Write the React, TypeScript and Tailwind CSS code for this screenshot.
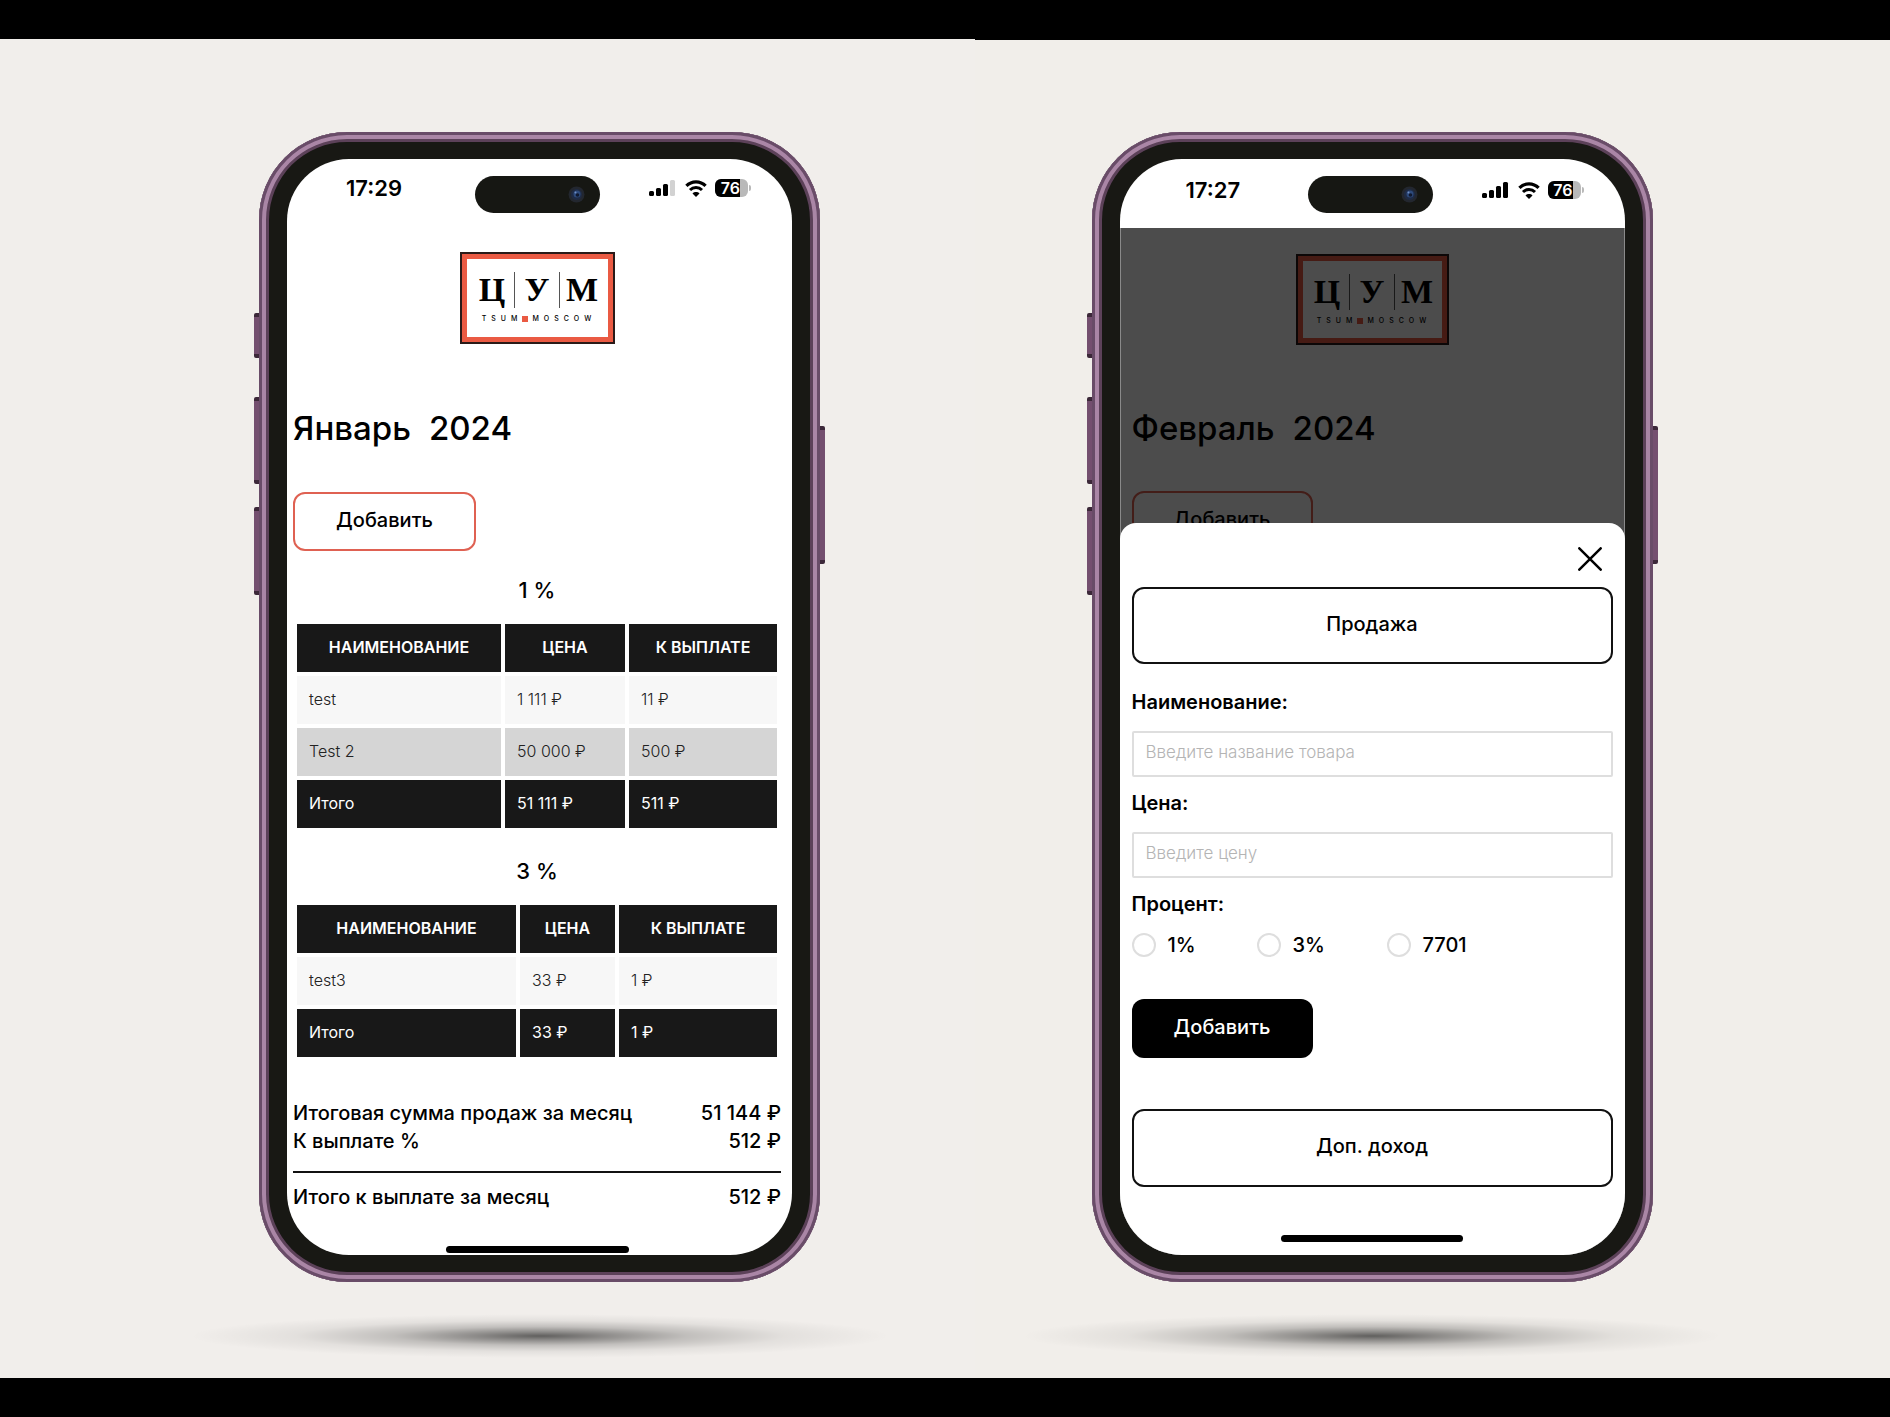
import type { ReactNode } from "react";

type Row = [string, string, string];

function StatusBar({ time, bars, className }: { time: string; bars: number; className: string }) {
  return (
    <div className={`flex h-[69px] shrink-0 items-start justify-between pr-[41px] ${className}`}>
      <span className="text-[22px] font-semibold leading-6">{time}</span>
      <div className="flex h-6 items-center gap-2">
        <svg width="28" height="18" viewBox="0 0 28 18" aria-hidden="true">
          <rect x="0" y="12" width="5" height="5" rx="1.5" fill="#000" />
          <rect x="7" y="9" width="5" height="8" rx="1.5" fill="#000" />
          <rect x="14" y="5" width="5" height="12" rx="1.5" fill="#000" />
          <rect x="21" y="1" width="5" height="16" rx="1.5" fill={bars > 3 ? "#000" : "#d2d2d2"} />
        </svg>
        <svg width="22" height="17" viewBox="0 0 22 17" fill="none" stroke="#000" aria-hidden="true">
          <path d="M1.4 5.9C6.7 0.4 15.3 0.4 20.6 5.9" strokeWidth="3.2" />
          <path d="M5 10C8.3 6.7 13.7 6.7 17 10" strokeWidth="3" />
          <path d="M11 17L7.5 13.4C9.4 11.5 12.6 11.5 14.5 13.4Z" fill="#000" stroke="none" />
        </svg>
        <div className="flex items-center gap-px">
          <div className="flex h-[18px] w-[33px] overflow-hidden rounded-[6px] bg-[#b9b9b9]">
            <span className="w-[25px] bg-black text-right text-base font-semibold leading-[18px] text-white">76</span>
          </div>
          <span className="h-[6px] w-[2px] rounded-r-full bg-[#b9b9b9]" />
        </div>
      </div>
    </div>
  );
}

function Logo({ className }: { className: string }) {
  return (
    <div className={`mx-auto border-2 border-[#2a1a18] bg-[#ea5a43] p-[5px] ${className}`}>
      <div className="flex h-full flex-col items-center bg-white pt-[13px]">
        <div className="flex items-center font-['Liberation_Serif',serif] text-[34px] font-bold leading-9">
          <span className="w-9 text-center">Ц</span>
          <span className="mx-1 h-9 w-px bg-[#555]" />
          <span className="w-9 text-center">У</span>
          <span className="mx-1 h-9 w-px bg-[#555]" />
          <span className="w-9 text-center">М</span>
        </div>
        <div className="mt-1.5 flex items-center text-[7px] font-medium leading-[10px]">
          <span className="tracking-[5px]">TSUM</span>
          <span className="mr-1 size-1.5 bg-[#ea5a43]" />
          <span className="-mr-1 tracking-[5px]">MOSCOW</span>
        </div>
      </div>
    </div>
  );
}

function Phone({ children }: { children: ReactNode }) {
  return (
    <div className="flex w-full flex-col items-center">
      <div className="relative flex min-h-[1150px] w-full max-w-[561px] flex-col rounded-[88px] bg-[#181814] px-7 py-[27px] shadow-[inset_0_0_0_3px_#694c68,inset_0_0_0_7px_#aa86a6,inset_0_0_0_10px_#5c4159]">
        <i className="absolute -left-[5px] top-[181px] h-[45px] w-[5px] rounded-l-xs border-y-4 border-[#3c2839] bg-[#744f6f]" />
        <i className="absolute -left-[5px] top-[265px] h-[87px] w-[5px] rounded-l-xs border-y-4 border-[#3c2839] bg-[#744f6f]" />
        <i className="absolute -left-[5px] top-[375px] h-[88px] w-[5px] rounded-l-xs border-y-4 border-[#3c2839] bg-[#744f6f]" />
        <i className="absolute -right-[5px] top-[294px] h-[138px] w-[5px] rounded-r-xs border-y-4 border-[#3c2839] bg-[#744f6f]" />
        <div className="relative flex flex-1 flex-col overflow-hidden rounded-[62px] bg-white">
          {children}
          <div className="absolute left-[188px] top-[17px] flex h-[37px] w-[125px] items-center justify-end rounded-full bg-[#161713] pr-[15px]">
            <svg width="17" height="17" viewBox="0 0 17 17" aria-hidden="true">
              <circle cx="8.5" cy="8.5" r="8" fill="#23272f" />
              <circle cx="8.5" cy="8.5" r="5.5" fill="#1f2b45" />
              <circle cx="9" cy="8" r="3.5" fill="#2d4a7c" />
              <circle cx="9.5" cy="9" r="1.8" fill="#111a30" />
              <circle cx="7.5" cy="6.5" r="1" fill="#6f8fc4" />
            </svg>
          </div>
        </div>
      </div>
      <div className="mt-8 h-11 w-full max-w-[700px] bg-[radial-gradient(closest-side,rgba(0,0,0,0.6)_0%,rgba(0,0,0,0.42)_18%,rgba(0,0,0,0.2)_42%,rgba(0,0,0,0.06)_70%,transparent_100%)]" />
    </div>
  );
}

function SalesTable({ title, rows, total, cols }: { title: string; rows: Row[]; total: Row; cols: [string, string] }) {
  return (
    <section className="mt-[25px]">
      <h2 className="text-center text-[22px] font-medium leading-7">{title}</h2>
      <table className="mt-4 w-full table-fixed border-separate border-spacing-1 text-base">
        <colgroup>
          <col className={cols[0]} />
          <col className={cols[1]} />
          <col />
        </colgroup>
        <thead>
          <tr className="h-12 text-white">
            <th className="bg-[#181818] pb-0.5 font-semibold">НАИМЕНОВАНИЕ</th>
            <th className="bg-[#181818] pb-0.5 font-semibold">ЦЕНА</th>
            <th className="bg-[#181818] pb-0.5 font-semibold">К ВЫПЛАТЕ</th>
          </tr>
        </thead>
        <tbody>
          {rows.map((row, i) => (
            <tr key={row[0]} className={`h-12 font-light text-[#222] ${i % 2 ? "bg-[#d5d5d5]" : "bg-[#f7f7f7]"}`}>
              {row.map((cell, j) => (
                <td key={j} className="px-3 pb-0.5">{cell}</td>
              ))}
            </tr>
          ))}
        </tbody>
        <tfoot>
          <tr className="h-12 bg-[#181818] text-white">
            {total.map((cell, j) => (
              <td key={j} className="px-3 pb-0.5">{cell}</td>
            ))}
          </tr>
        </tfoot>
      </table>
    </section>
  );
}

function MonthTitle({ month, className }: { month: string; className: string }) {
  return (
    <h1 className={`flex gap-[18px] text-[33px] font-medium leading-10 ${className}`}>
      <span>{month}</span>
      <span>2024</span>
    </h1>
  );
}

function SummaryLine({ label, value }: { label: string; value: string }) {
  return (
    <div className="flex justify-between">
      <dt>{label}</dt>
      <dd>{value}</dd>
    </div>
  );
}

function ReportScreen() {
  return (
    <>
      <StatusBar time="17:29" bars={3} className="pl-[59px] pt-[17px]" />
      <main className="flex flex-1 flex-col pb-0.5 pl-[6px] pr-[11px] pt-6">
        <Logo className="h-[92px] w-[155px]" />
        <MonthTitle month="Январь" className="mt-16" />
        <button type="button" className="mt-11 h-[59px] w-[183px] rounded-xl border-2 border-[#df6152] pb-1 text-xl font-medium">
          Добавить
        </button>
        <SalesTable
          title="1 %"
          cols={["w-[204px]", "w-[120px]"]}
          rows={[
            ["test", "1 111 ₽", "11 ₽"],
            ["Test 2", "50 000 ₽", "500 ₽"],
          ]}
          total={["Итого", "51 111 ₽", "511 ₽"]}
        />
        <SalesTable
          title="3 %"
          cols={["w-[219px]", "w-[95px]"]}
          rows={[["test3", "33 ₽", "1 ₽"]]}
          total={["Итого", "33 ₽", "1 ₽"]}
        />
        <dl className="mt-[38px] text-xl font-medium leading-7">
          <SummaryLine label="Итоговая сумма продаж за месяц" value="51 144 ₽" />
          <SummaryLine label="К выплате %" value="512 ₽" />
          <div className="mb-2.5 mt-4 h-0.5 bg-[#111]" />
          <SummaryLine label="Итого к выплате за месяц" value="512 ₽" />
        </dl>
        <div className="mx-auto mt-auto h-[7px] w-[183px] rounded-full bg-black" />
      </main>
    </>
  );
}

function Field({ id, label, placeholder, className }: { id: string; label: string; placeholder: string; className: string }) {
  return (
    <div className={className}>
      <label htmlFor={id} className="block text-xl font-semibold leading-7">
        {label}
      </label>
      <input
        id={id}
        type="text"
        placeholder={placeholder}
        className="mt-[15px] block h-[46px] w-full rounded-xs border-2 border-[#dedede] px-3 pb-1 text-[17px] font-light placeholder:text-[#b4b4b4]"
      />
    </div>
  );
}

function AddSaleScreen() {
  return (
    <>
      <StatusBar time="17:27" bars={4} className="pl-[66px] pt-[19px]" />
      <div className="grid flex-1">
        <main className="col-start-1 row-start-1 flex flex-col px-3 pt-[26px]">
          <Logo className="h-[91px] w-[153px]" />
          <MonthTitle month="Февраль" className="mt-[63px]" />
          <button type="button" className="mt-[43px] h-[59px] w-[181px] rounded-xl border-2 border-[#df6152] pb-1 text-xl font-medium">
            Добавить
          </button>
        </main>
        <div className="relative col-start-1 row-start-1 border-x border-[#8a8a8a] bg-black/70" />
        <form className="relative col-start-1 row-start-1 flex flex-col self-end rounded-t-2xl bg-white px-3 pb-[13px] pt-6" role="dialog" aria-label="Продажа">
          <button type="button" aria-label="Закрыть" className="mr-[11px] size-6 self-end">
            <svg width="24" height="24" viewBox="0 0 24 24" stroke="#000" strokeWidth="2.5" strokeLinecap="round" aria-hidden="true">
              <path d="M1.3 1.3L22.7 22.7M22.7 1.3L1.3 22.7" />
            </svg>
          </button>
          <button type="button" className="mt-4 h-[77px] rounded-xl border-2 border-[#111] pb-1 text-xl font-medium">
            Продажа
          </button>
          <Field id="name" label="Наименование:" placeholder="Введите название товара" className="mt-6" />
          <Field id="price" label="Цена:" placeholder="Введите цену" className="mt-3" />
          <fieldset className="mt-3">
            <legend className="text-xl font-semibold leading-7">Процент:</legend>
            <div className="mt-[13px] flex h-7 items-center text-xl font-medium">
              {[
                ["1%", "w-[125px]"],
                ["3%", "w-[130px]"],
                ["7701", "w-[130px]"],
              ].map(([text, width]) => (
                <label key={text} className={`flex items-center gap-3 ${width}`}>
                  <input type="radio" name="percent" className="size-6 appearance-none rounded-full border-2 border-[#dedede]" />
                  {text}
                </label>
              ))}
            </div>
          </fieldset>
          <button type="submit" className="mt-10 h-[59px] w-[181px] rounded-xl bg-black pb-1 text-xl font-medium text-white">
            Добавить
          </button>
          <button type="button" className="mt-[51px] h-[78px] rounded-xl border-2 border-[#111] pb-1 text-xl font-medium">
            Доп. доход
          </button>
          <div className="mx-auto mt-12 h-[7px] w-[182px] rounded-full bg-black" />
        </form>
      </div>
    </>
  );
}

export default function App() {
  return (
    <div className="grid min-h-screen grid-cols-[975fr_915fr] bg-black font-['Inter',sans-serif] text-black">
      <div className="my-[39px] bg-[#f1eeeb] pb-5 pl-[104px] pt-[93px]">
        <Phone>
          <ReportScreen />
        </Phone>
      </div>
      <div className="mb-[39px] mt-10 bg-[#f1eeea] pb-5 pr-[121px] pt-[92px]">
        <Phone>
          <AddSaleScreen />
        </Phone>
      </div>
    </div>
  );
}
